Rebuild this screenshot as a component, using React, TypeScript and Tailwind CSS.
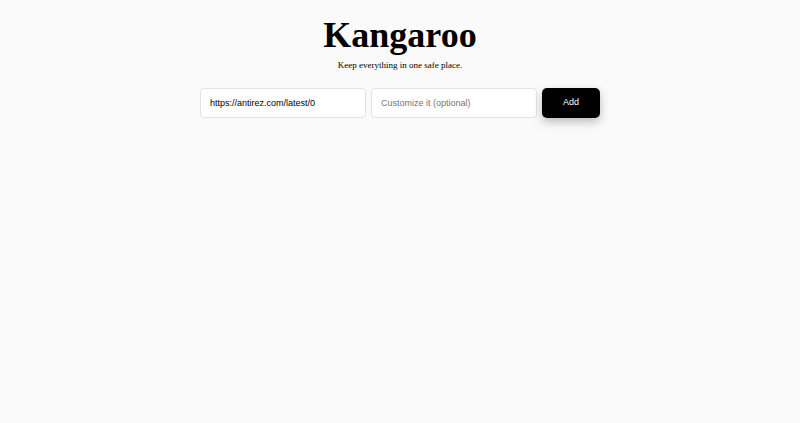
export default function App() {
  return (
    <div className="min-h-[423px] w-full bg-[#fafafa] flex flex-col items-center">
      <h1 className="pt-[17px] text-[36px] leading-none font-bold text-black" style={{ fontFamily: '"Liberation Serif", "Times New Roman", serif' }}>
        Kangaroo
      </h1>
      <p className="mt-[8px] text-[9px] leading-none text-black" style={{ fontFamily: '"Liberation Serif", "Times New Roman", serif' }}>
        Keep everything in one safe place.
      </p>
      <div className="mt-[18px] flex gap-[5px]" style={{ fontFamily: '"Liberation Sans", Arial, sans-serif' }}>
        <input
          className="w-[166px] h-[30px] rounded-[4px] border border-[#e3e3e3] bg-white px-[9px] text-[9px] text-black outline-none"
          defaultValue="https://antirez.com/latest/0"
        />
        <input
          className="w-[166px] h-[30px] rounded-[4px] border border-[#e3e3e3] bg-white px-[9px] text-[9px] text-black placeholder:text-[#757575] outline-none"
          placeholder="Customize it (optional)"
        />
        <button className="w-[58px] h-[30px] rounded-[5px] bg-black text-white text-[9px] shadow-[0_4px_10px_rgba(0,0,0,0.25)]">
          Add
        </button>
      </div>
    </div>
  );
}
